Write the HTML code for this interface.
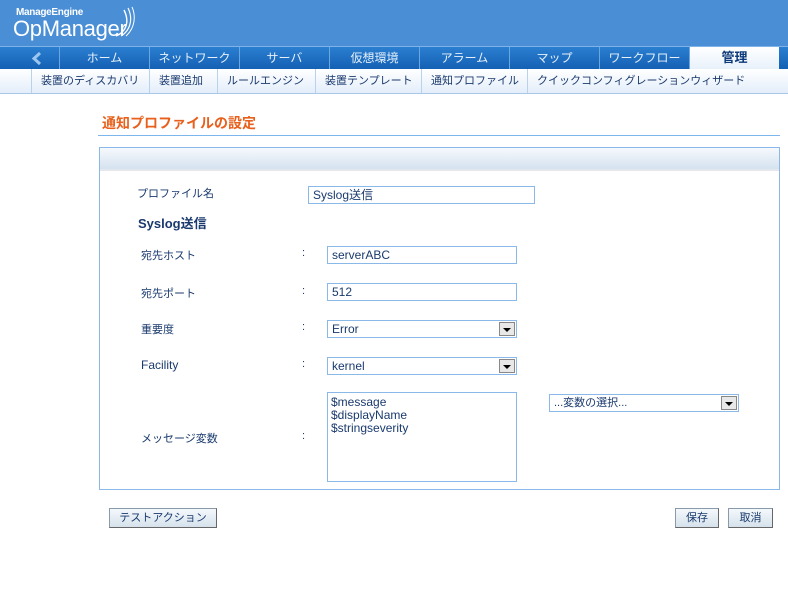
<!DOCTYPE html>
<html><head><meta charset="utf-8"><style>
*{margin:0;padding:0;box-sizing:border-box}
body{width:788px;height:594px;background:#fff;font-family:"Liberation Sans","Noto Sans CJK JP",sans-serif;font-size:12px;color:#1a3a6e;position:relative;overflow:hidden}
.a{position:absolute}
#hdr{left:0;top:0;width:788px;height:46px;background:#4a8ed6}
#tabs{left:0;top:46px;width:788px;height:23px;background:linear-gradient(#2b7fd0,#1460b4);border-top:1px solid #7fb2e6}
.tab{position:absolute;top:0;height:22px;line-height:22px;text-align:center;color:#e6f0fb;font-size:12px;border-left:1px solid #6aa6e0}
#sub{left:0;top:69px;width:788px;height:25px;background:linear-gradient(#fff,#e3eefa);border-bottom:1px solid #a9c8e8}
.si{position:absolute;top:0;height:24px;line-height:24px;font-size:11px;color:#1a3a6e;border-left:1px solid #b9d2ec;padding-left:9px}
.lbl{position:absolute;font-size:11px;color:#1a3a6e}
.inp{position:absolute;border:1px solid #8ab8e8;height:18px;font-size:12px;line-height:16px;padding-left:4px;color:#1a3a6e;background:#fff}
.dd{position:absolute;right:1px;top:1px;width:16px;height:14px;background:#e8e8e8;border:1px solid #888}
.dd:after{content:"";position:absolute;left:3px;top:5px;border-left:4px solid transparent;border-right:4px solid transparent;border-top:4px solid #000}
.btn{position:absolute;height:20px;border:1px solid #8a9aaa;border-right-color:#666;border-bottom-color:#666;background:linear-gradient(#f4f8fb,#d6e2ec);color:#1a3a6e;font-size:11px;line-height:18px;text-align:center}
</style></head><body>
<div id="hdr" class="a">
<div class="a" style="left:16px;top:7px;color:#fff;font-size:10px;font-weight:bold;letter-spacing:-0.3px">ManageEngine</div>
<div class="a" style="left:13px;top:16px;color:#fff;font-size:22px;letter-spacing:-0.3px">OpManager</div>
<svg class="a" style="left:112px;top:6px" width="26" height="32"><path d="M4 30 C 14 26 18 16 12 4" stroke="#fff" stroke-width="1.4" fill="none"/><path d="M9 30 C 19 24 21 12 16 2" stroke="#fff" stroke-width="1.2" fill="none"/><path d="M14 30 C 23 22 24 10 20 1" stroke="#fff" stroke-width="1" fill="none"/></svg>
</div>
<div id="tabs" class="a">
<svg class="a" style="left:31px;top:5px" width="12" height="13"><path d="M9 1 L3 6.5 L9 12" stroke="#9cc6f0" stroke-width="3" fill="none"/></svg>
<div class="tab" style="left:59px;width:90px">ホーム</div>
<div class="tab" style="left:149px;width:90px">ネットワーク</div>
<div class="tab" style="left:239px;width:90px">サーバ</div>
<div class="tab" style="left:329px;width:90px">仮想環境</div>
<div class="tab" style="left:419px;width:90px">アラーム</div>
<div class="tab" style="left:509px;width:90px">マップ</div>
<div class="tab" style="left:599px;width:90px">ワークフロー</div>
<div class="tab" style="left:689px;width:90px;background:linear-gradient(#fff,#e6f0fa);color:#0d3a7a;font-weight:bold;height:23px;font-size:13px">管理</div>
</div>
<div id="sub" class="a">
<div class="si" style="left:31px">装置のディスカバリ</div>
<div class="si" style="left:149px">装置追加</div>
<div class="si" style="left:217px">ルールエンジン</div>
<div class="si" style="left:315px">装置テンプレート</div>
<div class="si" style="left:421px">通知プロファイル</div>
<div class="si" style="left:527px">クイックコンフィグレーションウィザード</div>
</div>
<div class="a" style="left:102px;top:113px;color:#e8601c;font-weight:bold;font-size:14px">通知プロファイルの設定</div>
<div class="a" style="left:98px;top:135px;width:682px;height:1px;background:#7cb6ec"></div>
<div class="a" style="left:99px;top:147px;width:681px;height:343px;border:1px solid #8ab8e8">
<div style="height:23px;background:linear-gradient(#f6f9fd,#d4e2ef);border-bottom:2px solid #e4e8ec"></div>
</div>
<div class="lbl" style="left:137px;top:185px">プロファイル名</div>
<div class="inp" style="left:308px;top:186px;width:227px">Syslog送信</div>
<div class="lbl" style="left:138px;top:213px;font-weight:bold;font-size:13px">Syslog送信</div>
<div class="lbl" style="left:141px;top:247px">宛先ホスト</div><div class="lbl" style="left:302px;top:247px">:</div>
<div class="inp" style="left:327px;top:246px;width:190px">serverABC</div>
<div class="lbl" style="left:141px;top:285px">宛先ポート</div><div class="lbl" style="left:302px;top:285px">:</div>
<div class="inp" style="left:327px;top:283px;width:190px">512</div>
<div class="lbl" style="left:141px;top:321px">重要度</div><div class="lbl" style="left:302px;top:321px">:</div>
<div class="inp" style="left:327px;top:320px;width:190px">Error<div class="dd"></div></div>
<div class="lbl" style="left:141px;top:358px;font-size:12px">Facility</div><div class="lbl" style="left:302px;top:358px">:</div>
<div class="inp" style="left:327px;top:357px;width:190px">kernel<div class="dd"></div></div>
<div class="lbl" style="left:141px;top:430px">メッセージ変数</div><div class="lbl" style="left:302px;top:430px">:</div>
<div class="inp" style="left:327px;top:392px;width:190px;height:90px;line-height:13px;padding-top:3px;padding-left:3px">$message<br>$displayName<br>$stringseverity</div>
<div class="inp" style="left:549px;top:394px;width:190px;font-size:11px">...変数の選択...<div class="dd"></div></div>
<div class="btn" style="left:109px;top:508px;width:108px">テストアクション</div>
<div class="btn" style="left:675px;top:508px;width:44px">保存</div>
<div class="btn" style="left:728px;top:508px;width:45px">取消</div>
</body></html>
